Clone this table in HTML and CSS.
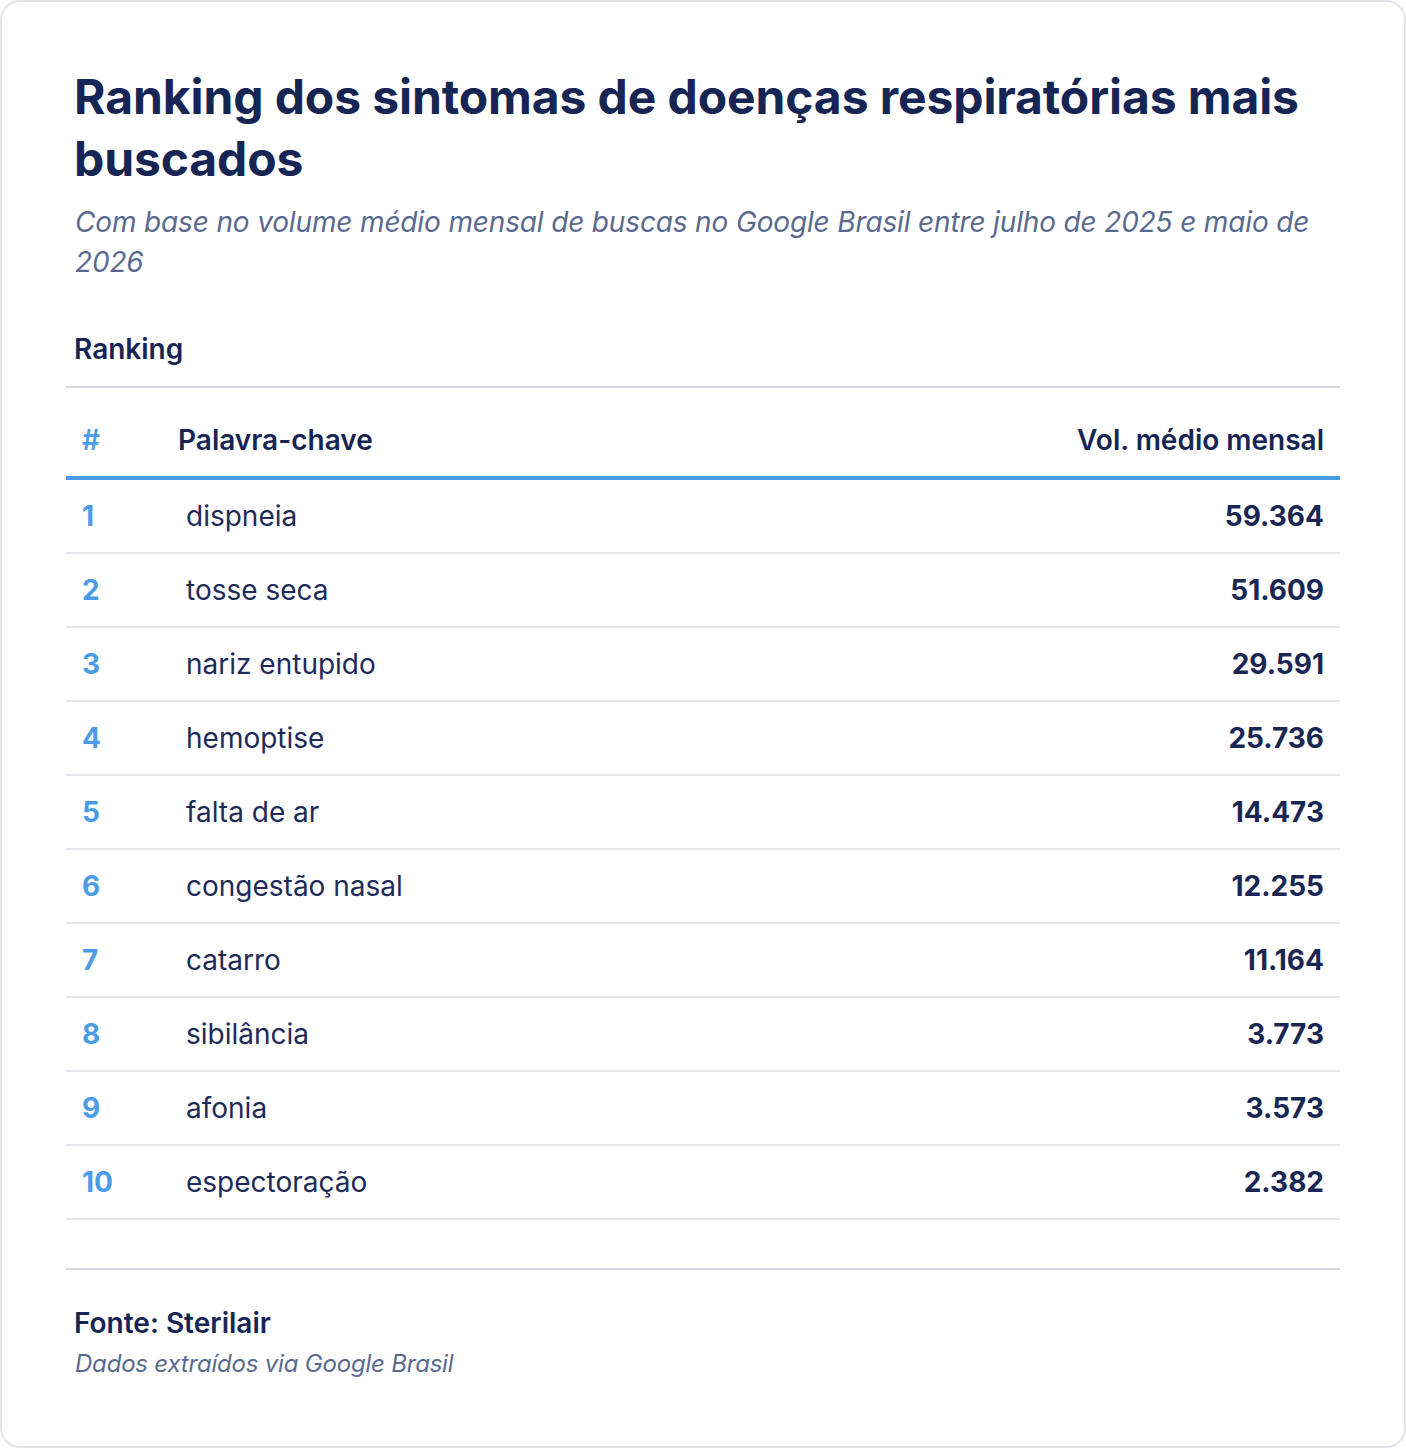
FILE: index.html
```html
<!DOCTYPE html>
<html lang="pt-BR">
<head>
<meta charset="utf-8">
<title>Ranking dos sintomas</title>
<link rel="stylesheet" href="styles.css">
</head>
<body>
<div class="card">
  <header class="head">
    <h1 class="title">Ranking dos sintomas de doenças respiratórias mais buscados</h1>
    <p class="subtitle">Com base no volume médio mensal de buscas no Google Brasil entre julho de 2025 e maio de 2026</p>
  </header>
  <section class="ranking">
    <div class="label">Ranking</div>
    <div class="table">
      <div class="row thead">
        <div class="c-rank">#</div>
        <div class="c-kw">Palavra-chave</div>
        <div class="c-vol">Vol. médio mensal</div>
      </div>
      <div class="row"><div class="c-rank">1</div><div class="c-kw">dispneia</div><div class="c-vol">59.364</div></div>
      <div class="row"><div class="c-rank">2</div><div class="c-kw">tosse seca</div><div class="c-vol">51.609</div></div>
      <div class="row"><div class="c-rank">3</div><div class="c-kw">nariz entupido</div><div class="c-vol">29.591</div></div>
      <div class="row"><div class="c-rank">4</div><div class="c-kw">hemoptise</div><div class="c-vol">25.736</div></div>
      <div class="row"><div class="c-rank">5</div><div class="c-kw">falta de ar</div><div class="c-vol">14.473</div></div>
      <div class="row"><div class="c-rank">6</div><div class="c-kw">congestão nasal</div><div class="c-vol">12.255</div></div>
      <div class="row"><div class="c-rank">7</div><div class="c-kw">catarro</div><div class="c-vol">11.164</div></div>
      <div class="row"><div class="c-rank">8</div><div class="c-kw">sibilância</div><div class="c-vol">3.773</div></div>
      <div class="row"><div class="c-rank">9</div><div class="c-kw">afonia</div><div class="c-vol">3.573</div></div>
      <div class="row"><div class="c-rank">10</div><div class="c-kw">espectoração</div><div class="c-vol">2.382</div></div>
    </div>
  </section>
  <footer class="foot">
    <div class="source">Fonte: Sterilair</div>
    <div class="note">Dados extraídos via Google Brasil</div>
  </footer>
</div>
</body>
</html>
```
FILE: styles.css
```css
* { box-sizing: border-box; }
html, body { margin: 0; padding: 0; background: #ffffff; }
body { font-family: Inter, "Noto Sans", sans-serif; color: #1a2755; }
.card {
  width: 1406px;
  height: 1448px;
  border: 2px solid #e4e5ea;
  border-radius: 20px;
  padding: 64px;
  background: #fff;
}
.head { padding: 0 8px; }
.title {
  margin: 0;
  font-size: 48px;
  line-height: 62.4px;
  font-weight: 700;
  color: #172554;
  letter-spacing: -0.1px;
}
.subtitle {
  margin: 11px 0 0;
  padding-left: 1px;
  font-size: 28px;
  line-height: 40px;
  font-style: italic;
  color: #5a6a8f;
  letter-spacing: -0.15px;
}
.ranking { margin-top: 46px; }
.label {
  padding: 0 8px 16px;
  font-size: 28px;
  line-height: 42px;
  font-weight: 600;
  color: #172554;
  border-bottom: 2px solid #d4d7df;
}
.table { margin-top: 16px; }
.row {
  display: grid;
  grid-template-columns: 96px 1fr auto;
  align-items: center;
  border-bottom: 2px solid #e6e7ec;
  font-size: 28px;
  line-height: 40px;
}
.row > div { padding: 16px; }
.thead {
  border-bottom: 4px solid #4a9be8;
  font-weight: 600;
  color: #172554;
}
.c-rank { color: #4a9be8; font-weight: 700; }
.thead .c-rank { font-weight: 600; }
.row:not(.thead) .c-kw { padding-left: 24px; color: #1e2a58; }
.c-vol { text-align: right; }
.row:not(.thead) .c-vol { font-weight: 700; color: #1a2755; }
.foot {
  margin-top: 48px;
  border-top: 2px solid #d4d7df;
  padding: 32px 8px 0;
}
.source {
  font-size: 28px;
  line-height: 42px;
  font-weight: 600;
  color: #172554;
}
.note {
  margin-top: 2px;
  padding-left: 1px;
  font-size: 24px;
  line-height: 36px;
  font-style: italic;
  color: #5a6a8f;
  letter-spacing: -0.2px;
}
```
